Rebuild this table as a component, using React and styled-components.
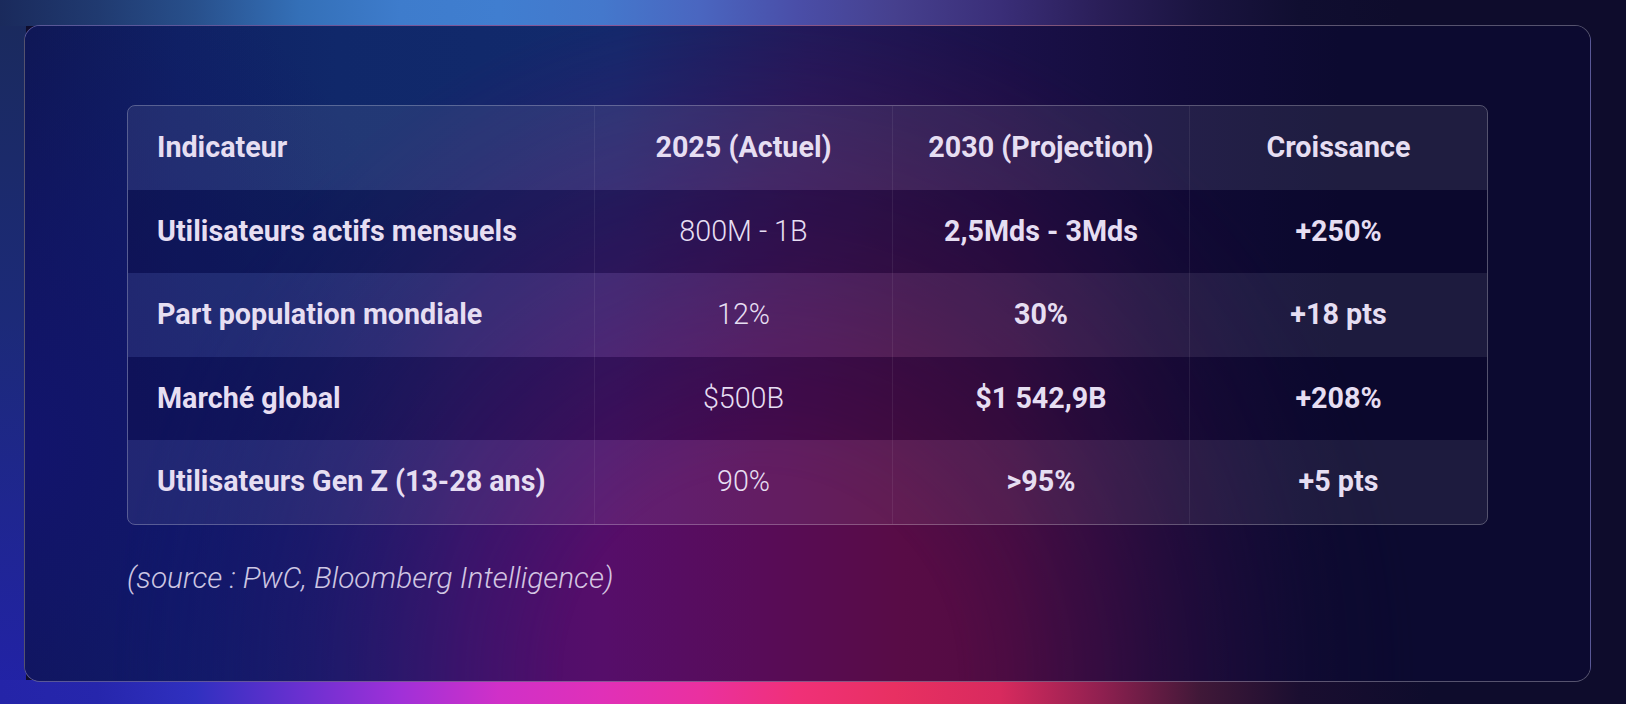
import React from 'react';
import styled, {createGlobalStyle} from 'styled-components';

const GlobalStyle = createGlobalStyle`
  html, body {
    margin: 0;
    padding: 0;
    background: #0e0c2c;
  }
  * {
    box-sizing: border-box;
  }
`;

const rows = [
    {label: 'Utilisateurs actifs mensuels', now: '800M - 1B', later: '2,5Mds - 3Mds', growth: '+250%'},
    {label: 'Part population mondiale', now: '12%', later: '30%', growth: '+18 pts'},
    {label: 'Marché global', now: '$500B', later: '$1 542,9B', growth: '+208%'},
    {label: 'Utilisateurs Gen Z (13-28 ans)', now: '90%', later: '>95%', growth: '+5 pts'},
];

class App extends React.Component {

    render() {
        return (
            <Page>
                <GlobalStyle />
                <Card>
                    <Table>
                        <Row tone="head">
                            <Cell bold>Indicateur</Cell>
                            <Cell bold center>2025 (Actuel)</Cell>
                            <Cell bold center>2030 (Projection)</Cell>
                            <Cell bold center>Croissance</Cell>
                        </Row>
                        {rows.map((r, i) => (
                            <Row key={r.label} tone={i % 2 === 0 ? 'dark' : 'light'}>
                                <Cell bold>{r.label}</Cell>
                                <Cell center>{r.now}</Cell>
                                <Cell bold center>{r.later}</Cell>
                                <Cell bold center>{r.growth}</Cell>
                            </Row>
                        ))}
                    </Table>
                    <Source>(source : PwC, Bloomberg Intelligence)</Source>
                </Card>
            </Page>
        )
    }
}

// the glow that shows round the card: one strip per edge
const Page = styled.div`
    height: 704px;
    display: flex;
    padding: 25px 35px 22px 24px;
    font-family: Roboto, "Liberation Sans", sans-serif;
    background:
        linear-gradient(90deg, #1a2a5c 0%, #203a70 6%, #28508c 12%, #3470b8 18.5%, #3e7ccc 24.6%,
            #407ed0 30.7%, #4478cc 37%, #4a66c0 43%, #4a4ea8 49%, #46408e 55%, #3a2e78 61.5%,
            #2a1e58 67.7%, #1a1440 73.8%, #100e30 80%, #0e0c2c 86%) top / 100% 26px no-repeat,
        linear-gradient(90deg, #2424a8 0%, #2626ac 6%, #3030c0 12%, #6a30d0 18.5%, #a030d8 24.6%,
            #d030c8 30.7%, #e030b8 37%, #ea30a0 43%, #f03078 49%, #e83062 55%, #d82a5e 61.5%,
            #902050 67.7%, #401838 73.8%, #1a0e30 80%, #0e0c2c 88%) bottom / 100% 24px no-repeat,
        linear-gradient(180deg, #1a2a5c 0%, #1c2a78 45%, #2222a8 100%) left / 26px 100% no-repeat,
        #0e0c2c;
`

const Card = styled.div`
    position: relative;
    flex: 1;
    display: flex;
    flex-direction: column;
    padding: 79px 102px 0;
    border: 1px solid rgba(255, 255, 255, 0.3);
    border-radius: 16px;
    overflow: hidden;
    background: linear-gradient(90deg, #12106a 0%, #141070 8%, #2a0e6c 18%, #480e6c 28%, #560e6a 37%,
        #580c58 47%, #580c46 56%, #520c42 63%, #420c40 69%, #2a0c3a 76%, #180c34 82%, #0e0a30 88%, #0c0a30 100%);

    &::before {
        content: '';
        position: absolute;
        inset: 0;
        background:
            radial-gradient(ellipse 420px 520px at 0 65%, #12146c 0%, rgba(18, 20, 108, 0.6) 45%, transparent 100%),
            linear-gradient(90deg, #0e1850 0%, #0f2264 10%, #10286a 20%, #122a6c 38%, #1e1a5a 50%,
                #1a1048 63%, #120c3a 74%, #0c0a30 84%, #0c0a30 100%);
        -webkit-mask-image: radial-gradient(ellipse 42% 105% at 47% 100%, transparent 30%, black 100%);
        mask-image: radial-gradient(ellipse 42% 105% at 47% 100%, transparent 30%, black 100%);
    }

    & > * {
        position: relative;
    }
`

const Table = styled.div`
    display: flex;
    flex-direction: column;
    border: 1px solid rgba(255, 255, 255, 0.3);
    border-radius: 8px;
    overflow: hidden;
`

const tones = {
    head: 'rgba(255, 255, 255, 0.08)',
    dark: 'rgba(8, 4, 36, 0.22)',
    light: 'rgba(255, 255, 255, 0.07)',
};

const Row = styled.div`
    display: grid;
    grid-template-columns: 466px 298px 297px 1fr;
    background: ${props => tones[props.tone]};
`

const Cell = styled.div`
    padding: 24px 29px;
    line-height: 35.6px;
    font-size: 28.7px;
    font-weight: ${props => props.bold ? 700 : 300};
    color: #e6def2;
    text-align: ${props => props.center ? 'center' : 'left'};
    white-space: nowrap;

    & + & {
        border-left: 1px solid rgba(255, 255, 255, 0.07);
    }
`

const Source = styled.p`
    margin: 32px 0 0;
    font-size: 29.8px;
    line-height: 42px;
    font-style: italic;
    font-weight: 300;
    color: rgba(232, 224, 246, 0.88);
`

export default App;
